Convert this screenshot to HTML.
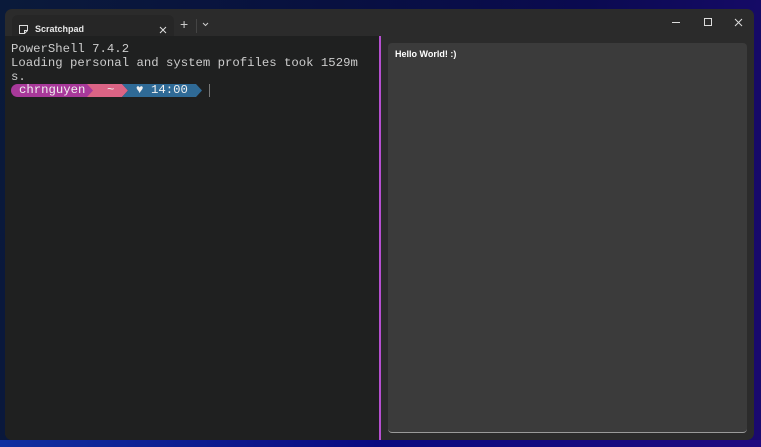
<!DOCTYPE html>
<html><head><style>
*{margin:0;padding:0;box-sizing:border-box}
body{width:761px;height:447px;overflow:hidden;background:linear-gradient(100deg,#0a1a3a 0%,#081040 40%,#0a0a50 70%,#1a0a70 100%);position:relative;font-family:"Liberation Sans",sans-serif}
.bot{position:absolute;left:0;right:0;top:440px;height:7px;background:linear-gradient(90deg,#1030a0,#0a0a80 50%,#200a80)}
.win{position:absolute;left:5px;top:9px;width:749px;height:431px;background:#2b2b2b;border-radius:7px;overflow:hidden}
.tab{position:absolute;left:7px;top:6px;width:162px;height:30px;background:#262626;border-radius:6px 6px 0 0}
.term{position:absolute;left:0;top:27px;width:374px;height:404px;background:#1f2020;font-family:"Liberation Mono",monospace;font-size:12.3px;color:#cccccc;line-height:14px;padding:6px 0 0 6px;white-space:pre}
.div{position:absolute;left:374px;top:27px;width:2px;height:404px;background:#b54fd0}
.box{position:absolute;left:383px;top:34px;width:359px;height:390px;background:#3b3b3b;border-radius:4px;border-bottom:1.5px solid #9a9a9a}
.seg{position:absolute;top:75px;height:13px}
.t{position:absolute;top:75px;font-family:'Liberation Mono',monospace;font-size:12.3px;line-height:13px;color:#f0f0f0;white-space:pre}
</style></head><body>
<div class="bot"></div>
<div class="win">
<div class="tab">
<svg style="position:absolute;left:6px;top:9px" width="11" height="11" viewBox="0 0 11 11"><path d="M1.5 1.5h8v5l-3 3h-5z M6.5 9.5v-3h3" fill="none" stroke="#ddd" stroke-width="1"/></svg>
<span style="position:absolute;left:23px;top:9px;font-size:9px;font-weight:bold;color:#e8e8e8">Scratchpad</span>
<svg style="position:absolute;left:147px;top:11px" width="8" height="8"><path d="M1 1l6 6M7 1l-6 6" stroke="#ddd"/></svg>
</div>
<span style="position:absolute;left:175px;top:7px;font-size:14px;color:#ccc">+</span>
<div style="position:absolute;left:191px;top:10px;width:1px;height:14px;background:#444"></div>
<svg style="position:absolute;left:197px;top:13px" width="7" height="5"><path d="M1 1l2.5 2.5L6 1" fill="none" stroke="#ccc"/></svg>
<div style="position:absolute;left:667px;top:13px;width:8px;height:1px;background:#ddd"></div>
<div style="position:absolute;left:699px;top:9px;width:8px;height:8px;border:1px solid #ddd"></div>
<svg style="position:absolute;left:729px;top:9px" width="9" height="9"><path d="M1 1l7 7M8 1l-7 7" stroke="#ddd"/></svg>
<div class="term">PowerShell 7.4.2
Loading personal and system profiles took 1529m
s.</div>
<div class="seg" style="left:6px;width:86px;background:#a8399a;border-radius:7px 0 0 7px;clip-path:polygon(0 0,80px 0,86px 50%,80px 100%,0 100%)"></div>
<div class="seg" style="left:82px;width:41px;background:#db6485;clip-path:polygon(0 0,35px 0,41px 50%,35px 100%,0 100%,6px 50%)"></div>
<div class="seg" style="left:117px;width:80px;background:#2f6a96;clip-path:polygon(0 0,74px 0,80px 50%,74px 100%,0 100%,6px 50%)"></div>
<div class="t" style="left:14px">chrnguyen</div>
<div class="t" style="left:102px">~</div>
<div class="t" style="left:131px">♥</div>
<div class="t" style="left:146px">14:00</div>
<div style="position:absolute;left:204px;top:75px;width:1px;height:13px;background:#777"></div>
<div class="div"></div>
<div class="box"><span style="position:absolute;left:7px;top:6px;font-size:9px;font-weight:bold;color:#fff">Hello World! :)</span></div>
</div>
</body></html>
